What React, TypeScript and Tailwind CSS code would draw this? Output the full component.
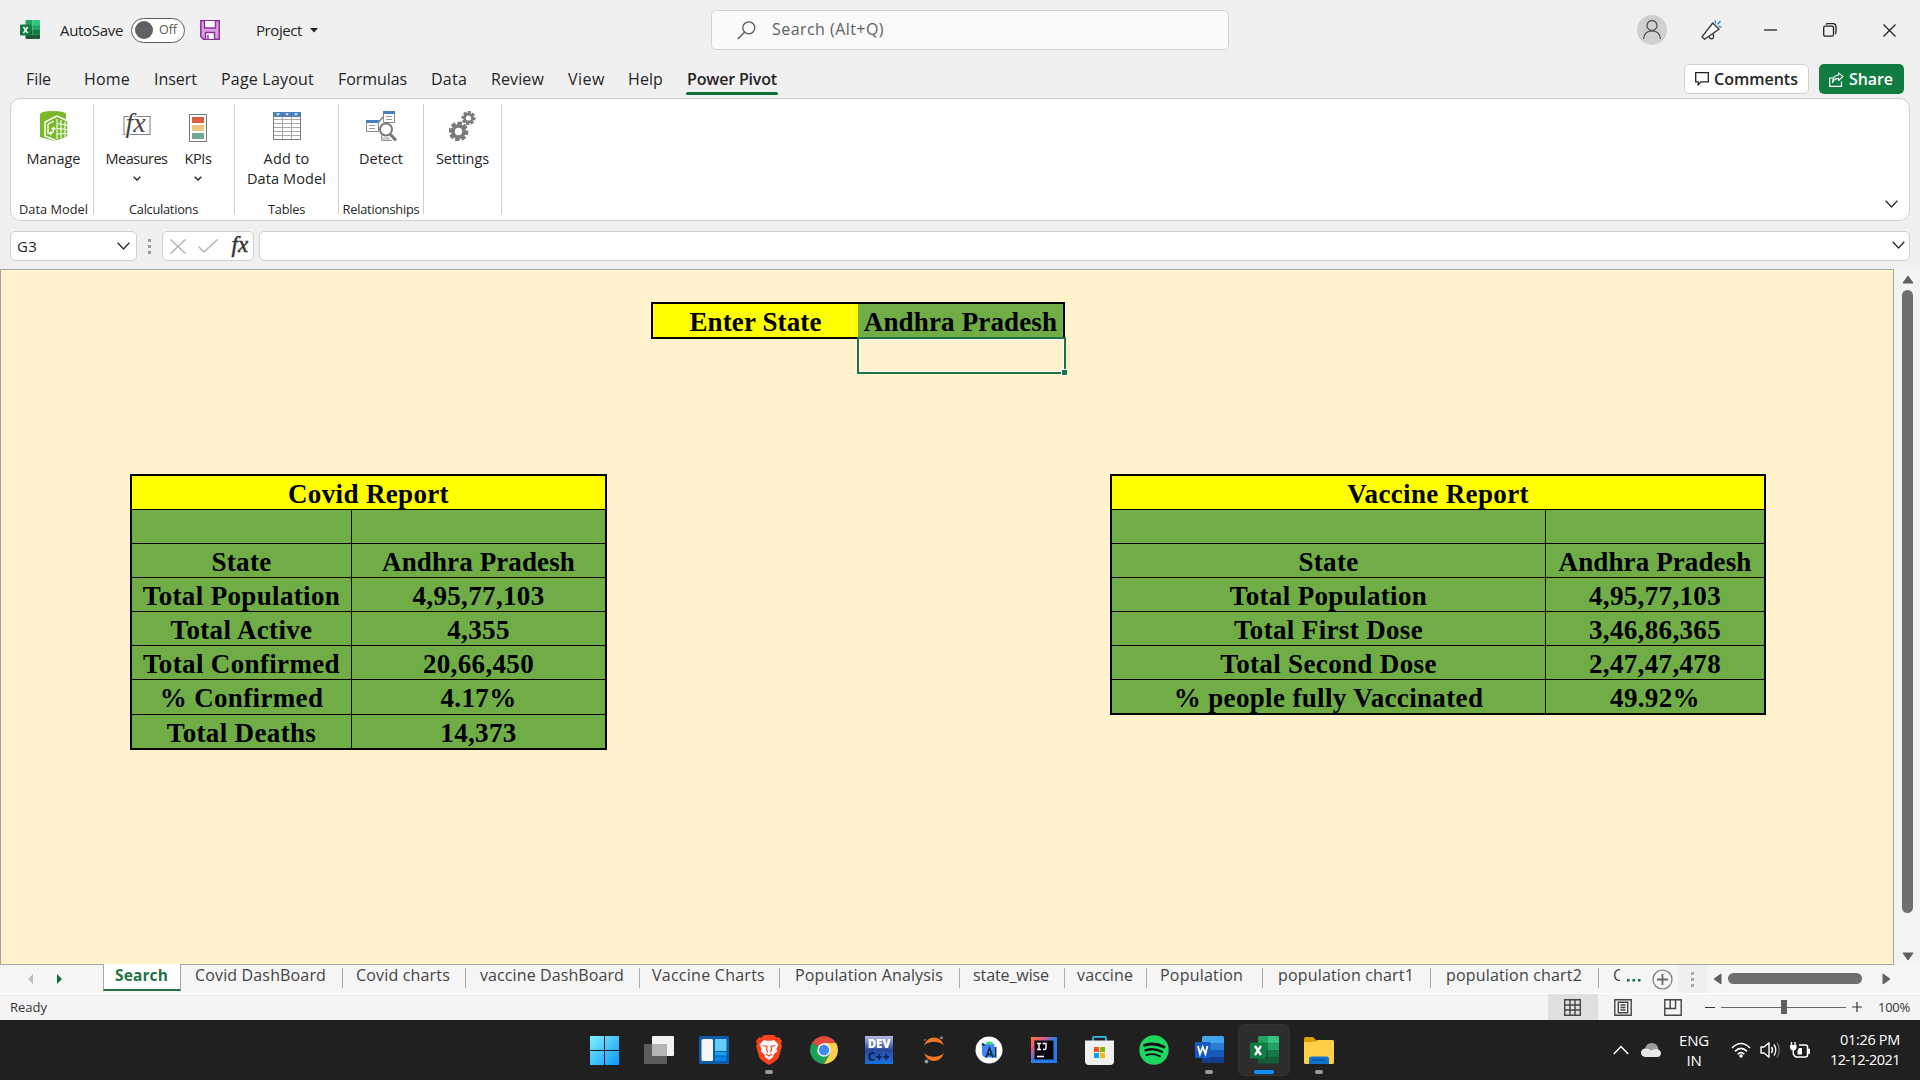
import React, { useLayoutEffect, useRef } from "react";

/** One line of text whose tracking is adjusted so that it fills the width of its box. */
function T({ c, children }: { c: string; children: string }) {
  const ref = useRef<HTMLSpanElement>(null);
  useLayoutEffect(() => {
    const el = ref.current;
    if (!el || !el.parentElement) return;
    el.style.letterSpacing = "0px";
    const gap = el.parentElement.clientWidth - el.getBoundingClientRect().width;
    el.style.letterSpacing = `${gap / children.length}px`;
  }, [children]);
  return (
    <span className={"block shrink-0 whitespace-nowrap " + c}>
      <span ref={ref} className="inline-block">{children}</span>
    </span>
  );
}

function Svg({ w, h, c = "", children }: { w: number; h: number; c?: string; children: React.ReactNode }) {
  return (
    <svg width={w} height={h} viewBox={`0 0 ${w} ${h}`} fill="none" className={"block shrink-0 " + c}>
      {children}
    </svg>
  );
}

function Chevron({ w = 12, h = 7, c = "", stroke = "#333", sw = 1.4 }: { w?: number; h?: number; c?: string; stroke?: string; sw?: number }) {
  return (
    <Svg w={w} h={h} c={c}>
      <path d={`M.7 .7 L${w / 2} ${h - 1} L${w - 0.7} .7`} stroke={stroke} strokeWidth={sw} />
    </Svg>
  );
}

function ExcelLogo({ size, c = "" }: { size: number; c?: string }) {
  return (
    <svg width={size} height={size} viewBox="0 0 29 29" className={"block shrink-0 " + c}>
      <path d="M8 1.500Q8 0 9.500 0H18V7.500H8Z" fill="#21a366" />
      <path d="M18 0H27.500Q29 0 29 1.500V7.500H18Z" fill="#33c481" />
      <path d="M8 7.500h10v7H8z" fill="#107c41" />
      <path d="M18 7.500h11v7H18z" fill="#21a366" />
      <path d="M8 14.500h10v7H8z" fill="#185c37" />
      <path d="M18 14.500h11v7H18z" fill="#107c41" />
      <path d="M8 21.500h21v4.500q0 1.500-1.500 1.500h-18Q8 27.500 8 26z" fill="#185c37" />
      <rect x="0" y="6.500" width="16" height="16" rx="1.300" fill="#107c41" />
      <path d="M5 10 L11 19 M11 10 L5 19" stroke="#fff" strokeWidth="2.300" />
    </svg>
  );
}

function TitleBar() {
  return (
    <div className="flex h-[60px] items-center">
      <ExcelLogo size={20} c="ml-[20px]" />
      <T c="ml-5 w-[63px] text-[15px]">AutoSave</T>
      <div className="ml-2 flex h-[25px] w-[54px] items-center rounded-full border border-[#5a5a5a] bg-white">
        <div className="ml-[3px] size-[18px] rounded-full bg-[#606060]" />
        <T c="ml-[6px] w-[18px] text-[12.500px] text-[#555]">Off</T>
      </div>
      <Svg w={20} h={20} c="ml-[15px]">
        <path d="M.8 .8H19.200V19.200H3.500L.8 16.500Z" fill="#d9a0dd" stroke="#8f2c9c" strokeWidth="1.500" />
        <path d="M4.500 1V8H15.500V1" fill="#fafafa" stroke="#8f2c9c" strokeWidth="1.400" />
        <path d="M5.500 19V12.500H14.500V19" fill="#fafafa" stroke="#8f2c9c" strokeWidth="1.400" />
        <path d="M8 15v4" stroke="#8f2c9c" strokeWidth="1.400" />
      </Svg>
      <T c="ml-[36px] w-[46px] text-[15px]">Project</T>
      <Svg w={8} h={5} c="ml-[8px]"><path d="M0 0H8L4 4.500Z" fill="#222" /></Svg>
      <div className="ml-[393px] flex h-[40px] w-[518px] items-center rounded-[5px] border border-[#d4d4d4] bg-[#fafafa]">
        <Svg w={19} h={19} c="ml-[25px]">
          <circle cx="11.800" cy="6.800" r="6" stroke="#555" strokeWidth="1.300" />
          <path d="M7.500 11.200L.8 18" stroke="#555" strokeWidth="1.300" />
        </Svg>
        <T c="ml-4 w-[112px] pb-[3px] text-[16px] text-[#606060]">Search (Alt+Q)</T>
      </div>
      <Svg w={30} h={30} c="ml-[408px]">
        <circle cx="15" cy="15" r="15" fill="#d0d0d0" />
        <ellipse cx="15" cy="10.500" rx="5" ry="5" stroke="#555" strokeWidth="1.300" />
        <path d="M6.500 24q.6-8 8.500-8.200 7.900.2 8.500 8.200" stroke="#555" strokeWidth="1.300" />
      </Svg>
      <Svg w={21} h={21} c="ml-[34px]">
        <path d="M11.800 3L18 9.300 3.500 19.300 1 16.800Z" fill="#fff" stroke="#333" strokeWidth="1.300" strokeLinejoin="round" />
        <path d="M8 16.500q1 3 3.500 2.200 1.800-1.200.6-4.800" stroke="#333" strokeWidth="1.300" />
        <path d="M14 .3l.7 3M19.500 1l-3 3.500M17.500 6.300l3 .8" stroke="#2a8dd4" strokeWidth="1.500" />
      </Svg>
      <Svg w={13} h={2} c="ml-[42px]"><path d="M0 1H13" stroke="#222" strokeWidth="1.300" /></Svg>
      <Svg w={14} h={14} c="ml-[46px]">
        <rect x=".7" y="3.200" width="9.800" height="10" rx="1.500" stroke="#222" strokeWidth="1.300" />
        <path d="M3 1.500Q3.500.7 5 .7H10Q13 .7 13 4V9q0 1.500-1 2" stroke="#222" strokeWidth="1.300" />
      </Svg>
      <Svg w={13} h={13} c="ml-[46px]"><path d="M.5 .5L12.500 12.500M12.500 .5L.5 12.500" stroke="#222" strokeWidth="1.300" /></Svg>
    </div>
  );
}

function RibbonTabs() {
  return (
    <div className="flex h-[38px] items-center text-[16px]">
      <T c="ml-[26px] w-[25px]">File</T>
      <T c="ml-[33px] w-[46px]">Home</T>
      <T c="ml-6 w-[43px]">Insert</T>
      <T c="ml-6 w-[93px]">Page Layout</T>
      <T c="ml-6 w-[69px]">Formulas</T>
      <T c="ml-6 w-[36px]">Data</T>
      <T c="ml-6 w-[53px]">Review</T>
      <T c="ml-6 w-[37px]">View</T>
      <T c="ml-[23px] w-[35px]">Help</T>
      <div className="relative ml-[23px] h-full w-[92px] pt-[7px]">
        <T c="ml-[1px] w-[90px] font-semibold">Power Pivot</T>
        <div className="absolute bottom-[3px] left-0 h-[3px] w-[92px] rounded-full bg-[#0f703b]" />
      </div>
      <div className="ml-[906px] flex h-[30px] w-[125px] items-center rounded-[5px] border border-[#d0d0d0] bg-white">
        <Svg w={14} h={14} c="ml-[10px]"><path d="M.7 .7H13.300V9.800H6L3.200 12.800V9.800H.7Z" stroke="#222" strokeWidth="1.300" /></Svg>
        <T c="ml-[5px] w-[84px] pb-[1px] text-[16px] font-semibold">Comments</T>
      </div>
      <div className="ml-[10px] flex h-[30px] w-[85px] items-center rounded-[5px] bg-[#107c41] text-white">
        <Svg w={15} h={15} c="ml-[10px]">
          <path d="M4 6H.7V14.300H12.500V9.500" stroke="#fff" strokeWidth="1.200" />
          <path d="M9.500 .9L14 4.700 9.500 8.500V6.400Q5.500 6.200 3.500 10.500 3.500 3.500 9.500 3Z" stroke="#fff" strokeWidth="1.100" strokeLinejoin="round" />
        </Svg>
        <T c="ml-[5px] w-[44px] pb-[1px] text-[16px] font-semibold">Share</T>
      </div>
    </div>
  );
}

function Gear({ x, y, r, hole }: { x: number; y: number; r: number; hole: number }) {
  return (
    <g transform={`translate(${x} ${y})`}>
      {[0, 45, 90, 135].map((a) => (
        <rect key={a} x={-r * 0.23} y={-r} width={r * 0.46} height={r * 2} fill="#7a7a7a" transform={`rotate(${a + 8})`} />
      ))}
      <circle r={r * 0.74} fill="#7a7a7a" />
      <circle r={hole} fill="#fff" />
    </g>
  );
}

function Ribbon() {
  return (
    <div className="mx-[10px] flex h-[123px] rounded-[10px] border border-[#cfcfcf] bg-white pt-[5px] text-[14.500px]">
      <div className="flex h-[110px] w-[83px] flex-col items-center border-r border-[#cfcfcf] pl-[3px]">
        <Svg w={28} h={30} c="mt-[7px]">
          <path d="M0 3.500Q0 0 13 0T26 3.500V25Q26 27 14 30L0 26Z" fill="#79b829" />
          <path d="M5 11L17 5 28 10V26L17 30 5 25Z" fill="#79b829" stroke="#fff" strokeWidth="1.500" />
          <path d="M17 8V28M21 9V27.500M25 10.500V26M17 12.500L28 14.500M17 17.500L28 18.500M17 23L28 22.500" stroke="#fff" strokeWidth="1.100" />
          <path d="M8 13V23M8 13l6-3M10 22q4 1 3.500-5M11.500 18.500l2-2 2 2M11.500 20.500l-2 1.700 2 1.700" stroke="#fff" strokeWidth="1.300" />
        </Svg>
        <T c="mt-[8px] w-[54px] leading-5">Manage</T>
        <T c="mt-auto mb-[-5px] w-[69px] text-[12.800px] leading-5">Data Model</T>
      </div>
      <div className="flex h-[110px] w-[141px] flex-col border-r border-[#cfcfcf]">
        <div className="flex">
          <div className="ml-[12px] flex w-[61px] flex-col items-center">
            <div className="mt-[6px] flex h-[31px] w-[28px] items-center">
              <svg width="28" height="31" viewBox="0 0 28 31" className="overflow-visible" fill="none">
                <rect x="1" y="6.500" width="26" height="18" stroke="#808080" />
                <text x="2.500" y="22" fontFamily="Liberation Serif" fontStyle="italic" fontSize="28" fill="#444" stroke="#fff" strokeWidth="2" paintOrder="stroke">fx</text>
              </svg>
            </div>
            <T c="mt-[8px] w-[62px] leading-5">Measures</T>
            <Chevron w={8} h={5} c="mt-[7px]" sw={1.600} />
          </div>
          <div className="ml-[17px] flex w-[28px] flex-col items-center">
            <Svg w={18} h={28} c="mt-[10px]">
              <rect x=".5" y=".5" width="17" height="27" stroke="#777" />
              <path d="M3 3h12v6H3z" fill="#d9603f" /><path d="M3 11h12v6H3z" fill="#eec57b" /><path d="M3 19h12v6H3z" fill="#73a793" />
            </Svg>
            <T c="mt-[7px] w-[27px] leading-5">KPIs</T>
            <Chevron w={8} h={5} c="mt-[7px]" sw={1.600} />
          </div>
        </div>
        <T c="mt-auto mb-[-5px] ml-[35px] w-[69px] text-[12.800px] leading-5">Calculations</T>
      </div>
      <div className="flex h-[110px] w-[104px] flex-col items-center border-r border-[#cfcfcf]">
        <Svg w={28} h={28} c="mt-[8px]">
          <path d="M.5 4.500H27.500V27.500H.5Z" stroke="#7a7a7a" />
          <path d="M1 7.500H27M1 11.500H27M1 15.500H27M1 19.500H27M1 23.500H27M9.500 5V27M18.500 5V27" stroke="#a8a8a8" />
          <path d="M0 0H28V4.500H0Z" fill="#4a80bd" />
          <path d="M3 1.500h4l-2 2zM12 1.500h4l-2 2zM21 1.500h4l-2 2z" fill="#fff" />
        </Svg>
        <T c="mt-[9px] w-[46px] leading-5">Add to</T>
        <T c="w-[79px] leading-5">Data Model</T>
        <T c="mt-auto mb-[-5px] w-[37px] text-[12.800px] leading-5">Tables</T>
      </div>
      <div className="flex h-[110px] w-[85px] flex-col items-center border-r border-[#cfcfcf]">
        <Svg w={31} h={30} c="mt-[7px]">
          <path d="M17.500 .5H28.500V11.500H17.500Z" fill="#fff" stroke="#888" />
          <path d="M17 0H29V3H17Z" fill="#4a80bd" /><path d="M20 5.500h6M20 8.500h6" stroke="#999" />
          <path d="M.5 9.500H12.500V20.500H.5Z" fill="#fff" stroke="#888" />
          <path d="M0 9H13V12H0Z" fill="#4a80bd" /><path d="M3 14.500h6M3 17.500h6" stroke="#999" />
          <path d="M12 12L17 6" stroke="#888" strokeWidth="1.500" />
          <path d="M15.500 22V29.500H26" stroke="#999" /><path d="M16 26h8v3h-8z" fill="#ccc" />
          <path d="M24.500 23.500L30 29.500" stroke="#777" strokeWidth="3" />
          <circle cx="20" cy="18.500" r="6" fill="#fff" stroke="#7a7a7a" strokeWidth="2" />
        </Svg>
        <T c="mt-[8px] w-[44px] leading-5">Detect</T>
        <T c="mt-auto mb-[-5px] w-[77px] text-[12.800px] leading-5">Relationships</T>
      </div>
      <div className="flex h-[110px] w-[78px] flex-col items-center border-r border-[#cfcfcf]">
        <Svg w={27} h={30} c="mt-[7px]">
          <Gear x={9.500} y={20.500} r={9.800} hole={3.700} />
          <Gear x={19.500} y={7} r={7} hole={2.600} />
        </Svg>
        <T c="mt-[8px] w-[53px] leading-5">Settings</T>
      </div>
      <Chevron w={13} h={8} c="mt-[96px] mr-[11px] ml-auto" />
    </div>
  );
}

function FormulaBar() {
  return (
    <div className="mt-[10px] ml-[10px] flex h-[30px] items-center">
      <div className="flex h-[30px] w-[127px] items-center rounded-[5px] border border-[#cfcfcf] bg-white">
        <T c="ml-[6px] w-[20px] text-[15px]">G3</T>
        <Chevron w={13} h={8} c="ml-[80px]" />
      </div>
      <div className="ml-[11px] flex w-[3px] flex-col gap-[3px]">
        <div className="size-[3px] bg-[#999]" /><div className="size-[3px] bg-[#999]" /><div className="size-[3px] bg-[#999]" />
      </div>
      <div className="ml-[11px] flex h-[30px] w-[92px] items-center rounded-[5px] border border-[#cfcfcf] bg-white">
        <Svg w={16} h={15} c="ml-[7px]"><path d="M.5 .5L15.500 14.500M15.500 .5L.5 14.500" stroke="#b4b4b4" strokeWidth="1.500" /></Svg>
        <Svg w={20} h={14} c="ml-[12px]"><path d="M.5 7.500L6 13 19.500 .5" stroke="#b4b4b4" strokeWidth="1.500" /></Svg>
        <Svg w={20} h={24} c="ml-[12px] overflow-visible">
          <text x="1.500" y="17.500" fontFamily="Liberation Serif" fontStyle="italic" fontSize="23" fill="#333" stroke="#333" strokeWidth=".5">fx</text>
        </Svg>
      </div>
      <div className="ml-[5px] flex h-[30px] w-[1651px] items-center justify-end rounded-[5px] border border-[#cfcfcf] bg-white">
        <Chevron w={13} h={8} c="mr-[4px] mb-[3px]" />
      </div>
    </div>
  );
}

type Row = [string, string];

function Report({ title, rows, frame, cols }: { title: string; rows: Row[]; frame: string; cols: string }) {
  return (
    <div className={"border-2 border-black bg-[#70ad47] tracking-[0.35px] " + frame}>
      <div className="h-[33px] overflow-hidden bg-[#ffff00] text-center leading-[37px]">{title}</div>
      {rows.map(([label, value], i) => (
        <div key={i} className={"grid h-[34px] border-t border-black text-center leading-[37px] " + cols}>
          <div className="overflow-hidden border-r border-black">{label}</div>
          <div className={"overflow-hidden " + (label === "State" ? "tracking-[0.12px]" : "")}>{value}</div>
        </div>
      ))}
    </div>
  );
}

const covid: Row[] = [
  ["", ""], ["State", "Andhra Pradesh"], ["Total Population", "4,95,77,103"], ["Total Active", "4,355"],
  ["Total Confirmed", "20,66,450"], ["% Confirmed", "4.17%"], ["Total Deaths", "14,373"],
];
const vaccine: Row[] = [
  ["", ""], ["State", "Andhra Pradesh"], ["Total Population", "4,95,77,103"], ["Total First Dose", "3,46,86,365"],
  ["Total Second Dose", "2,47,47,478"], ["% people fully Vaccinated", "49.92%"],
];

function Sheet() {
  return (
    <div className="mt-[8px] flex h-[696px]">
      <div className="w-[1894px] border border-[#a6a6a6] bg-[#fff2cc] font-['Liberation_Serif',serif] text-[27px] font-bold text-black">
        <div className="relative mt-[32px] ml-[650px] flex h-[37px] w-[414px] border-2 border-black text-center leading-[36px]">
          <div className="w-[205px] bg-[#ffff00] tracking-[0.12px]">Enter State</div>
          <div className="w-[205px] bg-[#70ad47] tracking-[0.15px] whitespace-nowrap">Andhra Pradesh</div>
          <div className="absolute top-[33px] left-[204px] h-[37px] w-[209px] border-2 border-[#217346]">
            <div className="h-full w-full border border-white" />
            <div className="absolute right-[-4px] bottom-[-4px] size-[7px] border border-white bg-[#217346]" />
          </div>
        </div>
        <div className="mt-[135px] ml-[129px] flex items-start">
          <Report title="Covid Report" rows={covid} frame="w-[477px] [&>div:nth-child(7)]:h-[35px]" cols="grid-cols-[220px_1fr]" />
          <Report title="Vaccine Report" rows={vaccine} frame="ml-[503px] w-[656px]" cols="grid-cols-[434px_1fr]" />
        </div>
      </div>
      <div className="flex w-[26px] flex-col items-center bg-[#f3f3f3] pl-[1px]">
        <Svg w={12} h={9} c="mt-[6px]"><path d="M1 8L6 1 11 8Z" fill="#606060" stroke="#606060" strokeLinejoin="round" /></Svg>
        <div className="mt-[6px] h-[623px] w-[11px] rounded-full bg-[#6e6e6e]" />
        <Svg w={12} h={9} c="mt-[39px]"><path d="M1 1H11L6 8Z" fill="#606060" stroke="#606060" strokeLinejoin="round" /></Svg>
      </div>
    </div>
  );
}

const sep = "h-5 w-px shrink-0 bg-[#ababab] ";

function SheetTabs() {
  return (
    <div className="flex h-[28px] items-start bg-[#f5f5f5] text-[16px] leading-[20px] text-[#444]">
      <Svg w={5} h={10} c="mt-[9px] ml-[28px]"><path d="M5 0V10L0 5Z" fill="#bdbdbd" /></Svg>
      <Svg w={5} h={10} c="mt-[9px] ml-[24px]"><path d="M0 0V10L5 5Z" fill="#0f6b37" /></Svg>
      <div className="mt-[-1px] ml-[41px] h-[27px] w-[78px] shrink-0 border-x border-b-2 border-x-[#a6a6a6] border-b-[#217346] bg-white text-[#217346]">
        <T c="ml-[11px] w-[53px] text-[15.500px] font-bold leading-[22px]">Search</T>
      </div>
      <T c="ml-[14px] w-[131px]">Covid DashBoard</T>
      <div className={sep + "mt-[3px] ml-[16px]"} />
      <T c="ml-[13px] w-[94px]">Covid charts</T>
      <div className={sep + "mt-[3px] ml-[15px]"} />
      <T c="ml-[14px] w-[144px]">vaccine DashBoard</T>
      <div className={sep + "mt-[3px] ml-[15px]"} />
      <T c="ml-[12px] w-[113px]">Vaccine Charts</T>
      <div className={sep + "mt-[3px] ml-[14px]"} />
      <T c="ml-[15px] w-[148px]">Population Analysis</T>
      <div className={sep + "mt-[3px] ml-[16px]"} />
      <T c="ml-[13px] w-[76px]">state_wise</T>
      <div className={sep + "mt-[3px] ml-[15px]"} />
      <T c="ml-[12px] w-[56px]">vaccine</T>
      <div className={sep + "mt-[3px] ml-[13px]"} />
      <T c="ml-[13px] w-[83px]">Population</T>
      <div className={sep + "mt-[3px] ml-[19px]"} />
      <T c="ml-[15px] w-[136px]">population chart1</T>
      <div className={sep + "mt-[3px] ml-[16px]"} />
      <T c="ml-[15px] w-[136px]">population chart2</T>
      <div className={sep + "mt-[3px] ml-[16px]"} />
      <span className="ml-[14px] w-[7px] shrink-0 overflow-hidden">C</span>
      <Svg w={14} h={3} c="mt-[14px] ml-[7px]"><path d="M0 0h2.500v2.500H0zM5.500 0H8v2.500H5.500zM11 0h2.500v2.500H11z" fill="#0f6b37" /></Svg>
      <Svg w={21} h={21} c="mt-[4px] ml-[11px]">
        <circle cx="10.500" cy="10.500" r="9.500" stroke="#777" strokeWidth="1.200" />
        <path d="M10.500 5V16M5 10.500H16" stroke="#666" strokeWidth="1.800" />
      </Svg>
      <div className="ml-[5px] flex h-[28px] w-[29px] shrink-0 flex-col items-center justify-center gap-[3px] bg-[#efefef]">
        <div className="size-[3px] bg-[#aaa]" /><div className="size-[3px] bg-[#aaa]" /><div className="size-[3px] bg-[#aaa]" />
      </div>
      <Svg w={9} h={12} c="mt-[8px] ml-[6px]"><path d="M8 1V11L1 6Z" fill="#606060" stroke="#606060" strokeLinejoin="round" /></Svg>
      <div className="mt-[8px] ml-[6px] h-[11px] w-[134px] shrink-0 rounded-full bg-[#6e6e6e]" />
      <Svg w={9} h={12} c="mt-[8px] ml-[20px]"><path d="M1 1V11L8 6Z" fill="#606060" stroke="#606060" strokeLinejoin="round" /></Svg>
    </div>
  );
}

function StatusBar() {
  return (
    <div className="flex h-[27px] items-center border-t border-white bg-[#f4f4f4]">
      <T c="ml-[10px] w-[37px] pt-[2px] text-[13px] text-[#333]">Ready</T>
      <div className="ml-[1501px] flex h-full w-[50px] items-center justify-center bg-[#dfdfdf]">
        <Svg w={17} h={17} c="mr-[1px]"><path d="M.7 .7H16.300V16.300H.7ZM.7 6H16.300M.7 11H16.300M6 .7V16.300M11 .7V16.300" stroke="#444" strokeWidth="1.400" /></Svg>
      </div>
      <Svg w={18} h={17} c="ml-4">
        <path d="M.8 .8H17.200V16.200H.8ZM4.300 3.300H13.700V13.700H4.300ZM6.500 6h5M6.500 8.500h5M6.500 11h5" stroke="#444" strokeWidth="1.400" />
      </Svg>
      <Svg w={18} h={17} c="ml-8">
        <path d="M.8 .8H17.200V16.200H.8ZM1 9.500H11.500V1M6.200 1V9.500" stroke="#444" strokeWidth="1.400" />
      </Svg>
      <div className="ml-[23px] h-px w-[10px] bg-[#333]" />
      <div className="ml-[6px] flex h-[14px] w-[125px] items-center">
        <div className="h-px w-[60px] bg-[#666]" /><div className="h-[14px] w-[6px] bg-[#5f5f5f]" /><div className="h-px flex-1 bg-[#666]" />
      </div>
      <Svg w={10} h={10} c="ml-[6px]"><path d="M5 0V10M0 5H10" stroke="#333" strokeWidth="1.200" /></Svg>
      <T c="ml-[16px] w-[32px] pt-[2px] text-[13px] text-[#333]">100%</T>
    </div>
  );
}

function TaskButton({ c = "", run = "", children }: { c?: string; run?: string; children: React.ReactNode }) {
  return (
    <div className={"relative flex h-[50px] w-[50px] shrink-0 items-center justify-center rounded-[5px] " + c}>
      {children}
      {run && <div className={"absolute bottom-[1px] h-[4px] rounded-full " + run} />}
    </div>
  );
}

function Taskbar() {
  const dot = "w-[8px] bg-[#9a9a9a]";
  return (
    <div className="flex h-[60px] items-center bg-[#202020] text-[15px] text-white">
      <div className="ml-[579px] flex gap-[5px]">
        <TaskButton>
          <Svg w={29} h={29}>
            <defs><linearGradient id="win" x1="0" y1="0" x2="29" y2="29" gradientUnits="userSpaceOnUse"><stop stopColor="#7ff3ff" /><stop offset="1" stopColor="#0a94ff" /></linearGradient></defs>
            <path d="M0 0H14V14H0ZM15 0H29V14H15ZM0 15H14V29H0ZM15 15H29V29H15Z" fill="url(#win)" />
          </Svg>
        </TaskButton>
        <TaskButton>
          <Svg w={30} h={28}>
            <rect x="0" y="8" width="23" height="20" rx="1" fill="#5c5c5c" />
            <rect x="8" y="0" width="22" height="20" rx="1" fill="#f2f2f2" />
            <rect x="8" y="8" width="15" height="12" fill="#b5b5b5" />
          </Svg>
        </TaskButton>
        <TaskButton>
          <Svg w={30} h={28}>
            <rect width="30" height="28" rx="1.500" fill="#0f5ba8" />
            <rect x="2.500" y="3" width="11.500" height="22" rx="1.500" fill="#f5f5f5" />
            <path d="M16 3h11.500v12H16z" fill="#62cdfb" /><path d="M16 16h11.500v3.500H16z" fill="#1ba0f2" /><path d="M16 20.500h11.500V25H16z" fill="#0a84e8" />
          </Svg>
        </TaskButton>
        <TaskButton run={dot}>
          <Svg w={26} h={30}>
            <path d="M8 0H18L20.500 2.500 23 2.200 26 6 25 9 26 11 22.500 23 Q21 25.500 13 30 5 25.500 3.500 23L0 11 1 9 0 6 3 2.200 5.500 2.500Z" fill="#f9421d" />
            <path d="M8 5L11 5.700H15L18 5 22.500 9.500 20.500 13.500 21 16.500 17.500 19.500 17 22 13 25 9 22 8.500 19.500 5 16.500 5.500 13.500 3.500 9.500Z" fill="#fff" />
            <path d="M6.500 10.500L11 11.500 10.500 14 11.500 17.500M19.500 10.500L15 11.500 15.500 14 14.500 17.500" stroke="#f9421d" strokeWidth="1.200" />
            <path d="M10 19L13 21 16 19" stroke="#f9421d" strokeWidth="1.200" />
          </Svg>
        </TaskButton>
        <TaskButton>
          <Svg w={28} h={28}>
            <path d="M14 14L1.900 7A14 14 0 0 1 26.100 7Z" fill="#e0493e" />
            <path d="M14 14L1.900 7A14 14 0 0 0 14 28L20 17.500Z" fill="#1da05a" />
            <path d="M14 7H26.100A14 14 0 0 1 14 28L20.100 17.500Z" fill="#fdd04b" />
            <circle cx="14" cy="14" r="6.700" fill="#f5f5f5" /><circle cx="14" cy="14" r="5.200" fill="#4688f1" />
          </Svg>
        </TaskButton>
        <TaskButton>
          <div className="flex h-[28px] w-[28px] flex-col items-center bg-linear-to-b from-[#b9b9e6] via-[#29479f] to-[#1473dc] font-['Open_Sans'] text-[11.500px] leading-[16px] font-extrabold">
            <span>DEV</span>
            <span className="text-[11.500px] leading-[10px] tracking-[0.5px] text-[#0a2458]">C++</span>
          </div>
        </TaskButton>
        <TaskButton>
          <Svg w={22} h={28}>
            <path d="M1 9.500Q4 1.500 11 1.500T21 9.500Q17 5.800 11 5.800T1 9.500Z" fill="#f37726" />
            <path d="M1 17Q4 25 11 25T21 17Q17 20.800 11 20.800T1 17Z" fill="#f37726" />
            <circle cx="18.500" cy="1.700" r="1.500" fill="#858585" /><circle cx="1.800" cy="4" r="1" fill="#777" /><circle cx="3.500" cy="25.500" r="1.900" fill="#999" />
          </Svg>
        </TaskButton>
        <TaskButton>
          <Svg w={28} h={28}>
            <circle cx="14" cy="14" r="13.500" fill="#fff" />
            <path d="M10 9Q10.500 5.500 14.500 5.500T19 9Z" fill="#3ddc84" />
            <path d="M7 8.500H19.500V18L21.500 21.500H11Q7 21 7 17.500Z" fill="#4285f4" />
            <path d="M7 7.500L9.500 9.500" stroke="#073042" strokeWidth="2" />
            <path d="M11 21.500L14.500 12 18 21.500M12.500 18.500H16.500M20.500 11V21.500" stroke="#073042" strokeWidth="1.800" />
          </Svg>
        </TaskButton>
        <TaskButton>
          <Svg w={26} h={26}>
            <defs><linearGradient id="ij" x1="0" y1="0" x2="26" y2="26" gradientUnits="userSpaceOnUse"><stop stopColor="#fc801d" /><stop offset=".25" stopColor="#e8557f" /><stop offset=".5" stopColor="#2b7fe8" /><stop offset="1" stopColor="#2474f0" /></linearGradient></defs>
            <path d="M0 0H26V26H0Z" fill="url(#ij)" /><path d="M3.500 3.500H22.500V22.500H3.500Z" fill="#0c0410" />
            <path d="M6 6.500h4M8 6.500v6M6 12.500h4M11.500 6.500H15V11q0 1.500-1.500 1.500H12M6 19.500h7" stroke="#fff" strokeWidth="1.400" />
          </Svg>
        </TaskButton>
        <TaskButton>
          <Svg w={29} h={29}>
            <path d="M8 5V1.800Q8 .8 9 .8H20Q21 .8 21 1.800V5" stroke="#35b9ef" strokeWidth="1.700" />
            <path d="M0 4.500H29V25Q29 29 25 29H4Q0 29 0 25Z" fill="#f0f0f0" />
            <path d="M9 11h5v5H9z" fill="#f25022" /><path d="M15 11h5v5h-5z" fill="#7fba00" /><path d="M9 17h5v5H9z" fill="#00a4ef" /><path d="M15 17h5v5h-5z" fill="#ffb900" />
          </Svg>
        </TaskButton>
        <TaskButton>
          <Svg w={30} h={30}>
            <circle cx="15" cy="15" r="14.700" fill="#1ed760" />
            <path d="M5.500 10.300Q15.500 7 25 12" stroke="#111" strokeWidth="2.800" strokeLinecap="round" />
            <path d="M6.500 15.300Q15 12.600 23 16.800" stroke="#111" strokeWidth="2.300" strokeLinecap="round" />
            <path d="M7.500 20Q14.500 17.700 21 21.300" stroke="#111" strokeWidth="1.900" strokeLinecap="round" />
          </Svg>
        </TaskButton>
        <TaskButton run={dot}>
          <Svg w={29} h={28}>
            <path d="M7 1.500Q7 0 8.500 0H27.500Q29 0 29 1.500V7H7Z" fill="#41a5ee" /><path d="M7 7h22v7H7z" fill="#2b7cd3" />
            <path d="M7 14h22v7H7z" fill="#185abd" /><path d="M7 21h22v4.500q0 1.500-1.500 1.500h-19Q7 27 7 25.500z" fill="#103f91" />
            <rect y="6" width="15.500" height="16" rx="1.300" fill="#185abd" />
            <path d="M3 10L5 18 7.700 11 10.400 18 12.400 10" stroke="#fff" strokeWidth="1.800" />
          </Svg>
        </TaskButton>
        <TaskButton c="bg-[#2d2d2d] outline outline-[#353535]" run="w-[20px] bg-[#0a91ff]">
          <ExcelLogo size={29} />
        </TaskButton>
        <TaskButton run={dot}>
          <Svg w={30} h={27}>
            <path d="M0 1.500Q0 0 1.500 0H9L12.500 3.500V8H0Z" fill="#e19f00" />
            <path d="M0 5H11L13.500 3H28.500Q30 3 30 4.500V25.500Q30 27 28.500 27H1.500Q0 27 0 25.500Z" fill="#ffcf48" />
            <path d="M5 27V22Q5 19.500 7.500 19.500H22.500Q25 19.500 25 22V27Z" fill="#0f74cc" />
            <path d="M8.500 23H21.500" stroke="#084b91" strokeWidth="1.300" />
          </Svg>
        </TaskButton>
      </div>
      <Svg w={16} h={10} c="ml-[269px]"><path d="M.8 9L8 1.500 15.200 9" stroke="#fff" strokeWidth="1.500" /></Svg>
      <Svg w={20} h={14} c="ml-3">
        <path d="M4 7Q4.500 0 11 0 16.500 .3 17.500 6L10 10Z" fill="#9c9c9c" />
        <path d="M4.500 14Q0 13.500 0 9.500 .3 6 4 5.500 7 5 10 7.500 13 5.800 16 6Q20 7 20 10.500 19.500 14 16 14Z" fill="#e8e8e8" />
      </Svg>
      <div className="ml-[18px] flex w-[30px] flex-col items-center leading-5">
        <T c="w-[30px]">ENG</T>
        <T c="w-[15px]">IN</T>
      </div>
      <Svg w={20} h={16} c="ml-[22px]">
        <path d="M1 6Q10-3 19 6M4 9.300Q10 3.500 16 9.300M6.700 12.300Q10 9 13.300 12.300" stroke="#fff" strokeWidth="1.600" />
        <circle cx="10" cy="14" r="1.700" fill="#fff" />
      </Svg>
      <Svg w={21} h={18} c="ml-[9px]">
        <path d="M1 6H4L9 1.800V16.200L4 12H1Z" stroke="#fff" strokeWidth="1.400" strokeLinejoin="round" />
        <path d="M11.500 6Q13.500 9 11.500 12M14 3.500Q17.500 9 14 14.500" stroke="#fff" strokeWidth="1.400" />
        <path d="M17 1.500Q21.500 9 17 16.500" stroke="#777" strokeWidth="1.200" />
      </Svg>
      <Svg w={21} h={17} c="ml-[9px]">
        <path d="M9 3H15.500Q17.500 3 17.500 5V13Q17.500 15 15.500 15H7Q4.500 15 4 12.500" stroke="#fff" strokeWidth="1.500" />
        <path d="M18 7h1.500v4.500H18z" fill="#fff" stroke="#fff" />
        <path d="M9 6H12V12.500H7.500V9Z" fill="#fff" />
        <path d="M1.500 0V3M5 0V3M3.300 8V13" stroke="#fff" strokeWidth="1.400" />
        <path d="M0 3H6.500V6Q6 8.500 3.300 8.500T0 6Z" fill="#fff" />
      </Svg>
      <div className="ml-[19px] flex w-[70px] flex-col items-end leading-5">
        <T c="w-[60px] text-[14.500px]">01:26 PM</T>
        <T c="w-[70px] text-[14.500px]">12-12-2021</T>
      </div>
    </div>
  );
}

export default function App() {
  return (
    <div className="h-[1080px] w-[1920px] overflow-hidden bg-[#f0f0f0] font-['Open_Sans','Noto_Sans',sans-serif] text-[#252525]">
      <TitleBar />
      <RibbonTabs />
      <Ribbon />
      <FormulaBar />
      <Sheet />
      <SheetTabs />
      <StatusBar />
      <Taskbar />
    </div>
  );
}
